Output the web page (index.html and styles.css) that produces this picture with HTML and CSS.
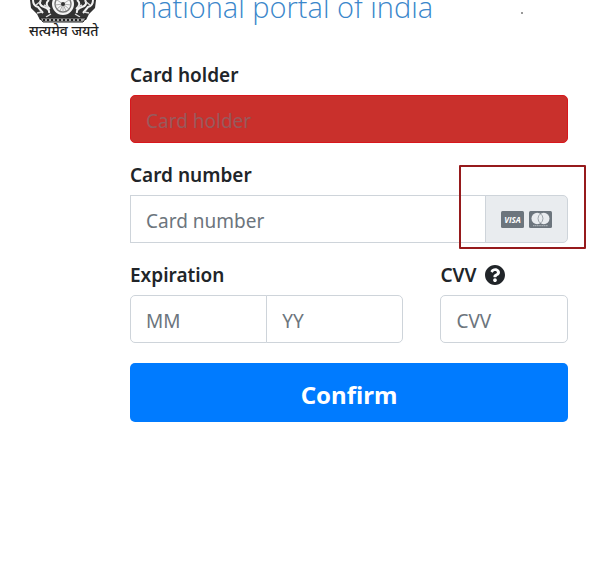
FILE: index.html
```html
<!DOCTYPE html>
<html lang="en">
<head>
  <meta charset="UTF-8">
  <meta name="viewport" content="width=device-width, initial-scale=1">
  <title>national portal of india</title>
  <link rel="stylesheet" href="styles.css">
</head>
<body>
  <header class="site-header">
    <div class="emblem">
      <svg class="emblem-art" viewBox="0 0 68 26" aria-hidden="true">
        <path d="M1 0 2 8 8 14 11 20 57 20 60 14 66 8 67 0Z" fill="#333"/>
        <path d="M4 0q0 6 5 7l5 6M12 0q-3 5 3 7t5 6M20 0q-5 4 1 9M64 0q0 6-5 7l-5 6M56 0q3 5-3 7t-5 6M48 0q5 4-1 9" fill="none" stroke="#f2f2f2" stroke-width="2"/>
        <path d="M7 5l5-4M13 12l-5 1M61 5l-5-4M55 12l5 1M22 14l-5 3M46 14l5 3M15 5l4 2M53 5l-4 2" stroke="#ddd" stroke-width="1.4"/>
        <circle cx="34" cy="4" r="12" fill="#f5f5f5" stroke="#333" stroke-width="2"/>
        <circle cx="34" cy="4" r="8" fill="none" stroke="#777" stroke-width="1.4"/>
        <path d="M34 4v8M34 4l3 7M34 4l-3 7M34 4l6 5M34 4l-6 5M34 4l8 1M34 4l-8 1M34 4l6-4M34 4l-6-4" stroke="#999" stroke-width=".8"/>
        <circle cx="34" cy="4" r="2" fill="#333"/>
        <path d="M11 18h46l-3 4H14Z" fill="#aaa" stroke="#222"/>
        <path d="M14 20h40" stroke="#222" stroke-width="2" stroke-dasharray="2 2"/>
      </svg>
      <span class="motto" lang="hi">सत्यमेव जयते</span>
    </div>
    <div class="portal-name">national portal of india</div>
    <span class="speck"></span>
  </header>

  <form class="card-form">
    <div class="form-group">
      <label for="holder">Card holder</label>
      <input class="form-control is-invalid" id="holder" type="text" placeholder="Card holder">
    </div>

    <div class="form-group">
      <label for="number">Card number</label>
      <div class="input-group">
        <input class="form-control" id="number" type="text" placeholder="Card number">
        <div class="input-addon">
          <svg class="card-icon" viewBox="0 0 23 17" role="img" aria-label="Visa">
            <rect width="23" height="17" rx="1.5" fill="#6c757d"/>
            <text class="visa" x="11.5" y="12" text-anchor="middle" fill="#fff">VISA</text>
          </svg>
          <svg class="card-icon" viewBox="0 0 23 17" role="img" aria-label="Mastercard">
            <rect width="23" height="17" rx="1.5" fill="#6c757d"/>
            <circle cx="8.2" cy="7.5" r="5.7" fill="#e9ecef"/>
            <circle cx="14.8" cy="7.5" r="5.7" fill="#e9ecef"/>
            <path d="M11.5 2.8a5.7 5.7 0 0 1 0 9.4a5.7 5.7 0 0 1 0-9.4Z" fill="#e9ecef" stroke="#6c757d" stroke-width=".6"/>
            <path d="M4 14.7h15" stroke="#b4babf" stroke-width="1" stroke-dasharray="1.4 .4"/>
          </svg>
          <span class="highlight"></span>
        </div>
      </div>
    </div>

    <div class="form-row">
      <div class="form-group">
        <label for="month">Expiration</label>
        <div class="input-group">
          <input class="form-control" id="month" type="text" placeholder="MM">
          <input class="form-control" id="year" type="text" placeholder="YY" aria-label="Expiration year">
        </div>
      </div>
      <div class="form-group">
        <label for="cvv">CVV
          <svg class="help-icon" viewBox="8 8 496 496" aria-hidden="true">
            <path fill="currentColor" d="M504 256c0 136.997-111.043 248-248 248S8 392.997 8 256C8 119.083 119.043 8 256 8s248 111.083 248 248zM262.655 90c-54.497 0-89.255 22.957-116.549 63.758-3.536 5.286-2.353 12.415 2.715 16.258l34.699 26.31c5.205 3.947 12.621 3.008 16.665-2.122 17.864-22.658 30.113-35.797 57.303-35.797 20.429 0 45.698 13.148 45.698 32.958 0 14.976-12.363 22.667-32.534 33.976C247.128 238.528 216 254.941 216 296v4c0 6.627 5.373 12 12 12h56c6.627 0 12-5.373 12-12v-1.333c0-28.462 83.186-29.647 83.186-106.667 0-58.002-60.165-102-116.531-102zM256 338c-25.365 0-46 20.635-46 46 0 25.364 20.635 46 46 46s46-20.636 46-46c0-25.364-20.635-46-46-46z"/>
          </svg>
        </label>
        <input class="form-control" id="cvv" type="text" placeholder="CVV">
      </div>
    </div>

    <button class="btn-confirm" type="button">Confirm</button>
  </form>
</body>
</html>
```

FILE: styles.css
```css
* {
  box-sizing: border-box;
}
body {
  margin: 0;
  background: #fff;
  color: #212529;
  font-family: "Segoe UI", "Noto Sans", "Open Sans", sans-serif;
  font-size: 19px;
}

.site-header {
  display: flex;
  align-items: flex-start;
  height: 40px;
  padding-left: 29px;
  overflow: hidden;
}
.emblem {
  display: flex;
  flex-direction: column;
  flex: none;
  width: 68px;
}
.emblem-art {
  height: 26px;
}
.motto {
  margin-top: -4px;
  font-size: 14px;
  line-height: 18px;
  font-weight: 500;
  text-align: center;
  white-space: nowrap;
  color: #222;
}
.portal-name {
  margin: -14px 0 0 43px;
  font-family: "Segoe UI Light", "Open Sans", sans-serif;
  font-size: 29px;
  font-weight: 300;
  line-height: 42px;
  white-space: nowrap;
  color: #3b87cb;
}
.speck {
  width: 2px;
  height: 2px;
  margin: 12px 0 0 88px;
  background: #999;
}

.card-form {
  padding: 23px 35px 23px 130px;
}
.form-group {
  margin-bottom: 20px;
}
.form-group label {
  display: flex;
  align-items: center;
  gap: 8px;
  margin-bottom: 8px;
  font-weight: 600;
  line-height: 24px;
}
.form-row {
  display: grid;
  grid-template-columns: 15fr 7fr;
  gap: 37px;
}
.form-control {
  display: block;
  width: 100%;
  min-width: 0;
  height: 48px;
  padding: 4px 15px 0;
  border: 1px solid #ced4da;
  border-radius: 5px;
  background: #fff;
  color: #495057;
  font: inherit;
}
.form-control::placeholder {
  color: #6c757d;
  opacity: 1;
}
.form-control.is-invalid {
  border-color: #d9161c;
  background: #c9302c;
}
.form-control.is-invalid::placeholder {
  color: #985a5c;
}

.input-group {
  display: flex;
}
.input-group .form-control:not(:last-child) {
  border-top-right-radius: 0;
  border-bottom-right-radius: 0;
}
.input-group .form-control + .form-control {
  margin-left: -1px;
  border-top-left-radius: 0;
  border-bottom-left-radius: 0;
}
#number {
  border-radius: 0;
}
.input-addon {
  position: relative;
  display: flex;
  align-items: center;
  flex: none;
  gap: 5px;
  margin-left: -1px;
  padding: 0 15px;
  border: 1px solid #ced4da;
  border-radius: 0 5px 5px 0;
  background: #e9ecef;
}
.card-icon {
  width: 23px;
  height: 17px;
}
.visa {
  font-family: "Open Sans", sans-serif;
  font-size: 8px;
  font-style: italic;
  font-weight: 700;
}
/* box around the accepted cards */
.highlight {
  position: absolute;
  top: -31px;
  right: -19px;
  bottom: -7px;
  left: -27px;
  border: 2px solid #961a1c;
  border-radius: 1px;
  pointer-events: none;
}
.help-icon {
  width: 20px;
  height: 20px;
}

.btn-confirm {
  display: block;
  width: 100%;
  height: 59px;
  padding: 3px 16px 0;
  border: 0;
  border-radius: 5px;
  background: #007bff;
  color: #fff;
  font: inherit;
  font-size: 24px;
  font-weight: 700;
  cursor: pointer;
}
```
